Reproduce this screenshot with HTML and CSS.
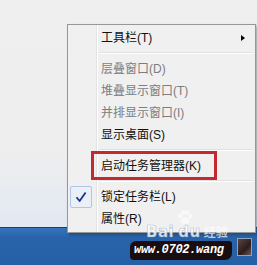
FILE: index.html
```html
<!DOCTYPE html>
<html>
<head>
<meta charset="utf-8">
<link rel="stylesheet" href="styles.css">
</head>
<body>
<div class="screen">
  <div class="desktop"></div>
  <div class="taskbar"></div>

  <div class="menu">
    <div class="item">工具栏(T)<span class="arrow"></span></div>
    <div class="sep"></div>
    <div class="item disabled">层叠窗口(D)</div>
    <div class="item disabled">堆叠显示窗口(T)</div>
    <div class="item disabled">并排显示窗口(I)</div>
    <div class="item">显示桌面(S)</div>
    <div class="sep"></div>
    <div class="item">启动任务管理器(K)</div>
    <div class="sep"></div>
    <div class="item">
      <span class="check">
        <svg width="12" height="12" viewBox="0 0 12 12"><path d="M1.5 6.2 L4.6 10 L10.6 1.5" fill="none" stroke="#1c3583" stroke-width="1.8" stroke-linejoin="round"/></svg>
      </span>锁定任务栏(L)</div>
    <div class="item">属性(R)</div>
  </div>

  <div class="highlight"></div>

  <svg class="paw" width="16" height="15" viewBox="0 0 16 15">
    <g fill="rgba(255,255,255,0.6)">
      <ellipse cx="3" cy="6" rx="2" ry="2.5"/>
      <ellipse cx="6.3" cy="2.6" rx="2" ry="2.5"/>
      <ellipse cx="10" cy="2.6" rx="2" ry="2.5"/>
      <ellipse cx="13.2" cy="6" rx="2" ry="2.5"/>
      <path d="M8 7 C5 7 3.5 10.5 4 12.5 C4.5 14.5 7 13.5 8 13.5 C9 13.5 11.5 14.5 12 12.5 C12.5 10.5 11 7 8 7 Z"/>
    </g>
  </svg>
  <div class="mark"><span class="bai">Bai</span><span class="du">du</span><span class="jy">经验</span></div>
  <div class="brush">www.0702.wang</div>
  <div class="tray"></div>
</div>
</body>
</html>
```

FILE: styles.css
```css
html, body {
  margin: 0;
  padding: 0;
}
body {
  font-family: "Liberation Sans", "Noto Sans CJK SC", sans-serif;
  font-size: 12px;
}
.screen {
  position: relative;
  width: 257px;
  height: 265px;
  overflow: hidden;
  display: flex;
  flex-direction: column;
}
.desktop {
  height: 227px;
  background: linear-gradient(to bottom, #efefef 0, #eeeeee 150px, #e6eaf1 200px, #e3e8f1 226px);
}
.taskbar {
  flex: 1;
  border-top: 1px solid #1d3f6e;
  background: linear-gradient(to bottom, #3573ba 0, #2863aa 10px, #2460a6 100%);
}
.menu {
  position: absolute;
  left: 67px;
  top: 24px;
  width: 183px;
  padding: 2px;
  border: 1px solid #979797;
  background-color: #f0f0f0;
  background-image: linear-gradient(to right, transparent 28px, #e2e3e3 28px, #e2e3e3 29px, #ffffff 29px, #ffffff 30px, transparent 30px);
  box-shadow: 2px 2px 3px rgba(0, 0, 0, 0.3);
}
.item {
  position: relative;
  height: 22px;
  line-height: 22px;
  padding-left: 31px;
  color: #111;
  white-space: nowrap;
}
.item.disabled {
  color: #7d7d7d;
}
.arrow {
  position: absolute;
  left: 171px;
  top: 8px;
  width: 0;
  height: 0;
  border-top: 3.5px solid transparent;
  border-bottom: 3.5px solid transparent;
  border-left: 4px solid #000;
}
.sep {
  height: 0;
  margin: 3px 0 4px 30px;
  border-top: 1px solid #e0e0e0;
  border-bottom: 1px solid #ffffff;
}
.check {
  position: absolute;
  left: 0;
  top: 0;
  width: 20px;
  height: 20px;
  border: 1px solid #b0c6e2;
  border-radius: 2px;
  background: #eaf0f8;
  display: flex;
  align-items: center;
  justify-content: center;
}
.highlight {
  position: absolute;
  left: 91px;
  top: 151px;
  width: 120px;
  height: 23px;
  border: 3px solid #c22a2f;
}
.paw {
  position: absolute;
  left: 177px;
  top: 210px;
}
.mark {
  position: absolute;
  left: 146px;
  top: 224px;
  height: 16px;
  line-height: 16px;
  color: rgba(255, 255, 255, 0.82);
  font-family: "DejaVu Sans", sans-serif;
  font-weight: bold;
  white-space: nowrap;
}
.bai, .du {
  font-size: 15px;
  letter-spacing: 0.5px;
  -webkit-text-stroke: 0.6px rgba(120, 150, 190, 0.6);
}
.du {
  margin-left: 4px;
}
.jy {
  font-family: "Noto Sans CJK SC", sans-serif;
  font-size: 12px;
  margin-left: 3px;
  color: rgba(255, 255, 255, 0.7);
}
.brush {
  position: absolute;
  left: 130px;
  top: 241px;
  width: 98px;
  height: 19px;
  line-height: 19px;
  padding-left: 4px;
  background: #1a0d0f;
  border-radius: 6px 3px 7px 4px;
  color: #ffffff;
  font-family: "Liberation Mono", monospace;
  font-style: italic;
  font-weight: bold;
  font-size: 12px;
  letter-spacing: -0.3px;
}
.tray {
  position: absolute;
  left: 237px;
  top: 238px;
  width: 13px;
  height: 16px;
  background: linear-gradient(135deg, #5a4740 0, #2b1c1c 60%, #6b5a55 100%);
  border: 1px solid #8da2bd;
}
```
